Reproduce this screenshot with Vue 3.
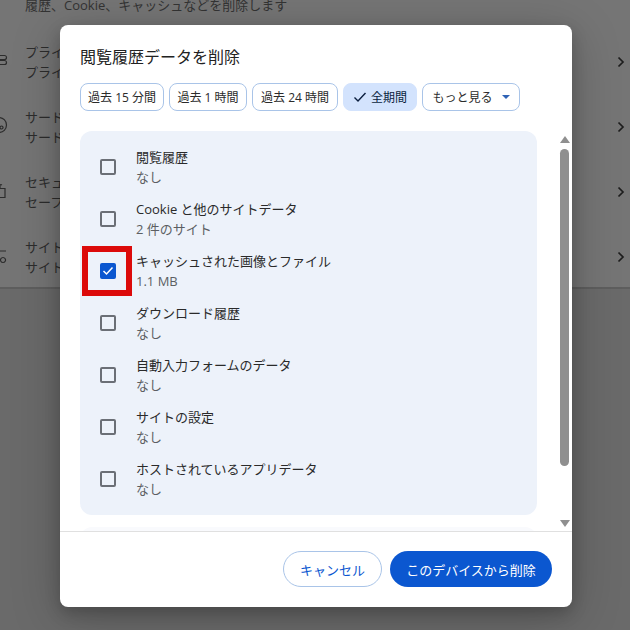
<script setup>
const ranges = ['過去 15 分間', '過去 1 時間', '過去 24 時間']
const items = [
  { title: '閲覧履歴', sub: 'なし', checked: false },
  { title: 'Cookie と他のサイトデータ', sub: '2 件のサイト', checked: false },
  { title: 'キャッシュされた画像とファイル', sub: '1.1 MB', checked: true },
  { title: 'ダウンロード履歴', sub: 'なし', checked: false },
  { title: '自動入力フォームのデータ', sub: 'なし', checked: false },
  { title: 'サイトの設定', sub: 'なし', checked: false },
  { title: 'ホストされているアプリデータ', sub: 'なし', checked: false }
]
const bgRows = [
  { t: 'プライバシー', s: 'プライバシー', icon: 'M0 5.500h4.500a1.500 1.500 0 0 1 0 4H0M0 10.500h4.500a1.500 1.500 0 0 1 0 4H0' },
  { t: 'サードパーティ', s: 'サードパーティ', icon: 'M-1 2.500a7.500 7.500 0 1 1 0 15M1.500 11a1.500 1.500 0 1 0 .01 0' },
  { t: 'セキュリティ', s: 'セーフ ブラウジング', icon: 'M0 8.500h5v9H0M0 8V5a2 2 0 0 1 2 0' },
  { t: 'サイトの設定', s: 'サイトの設定', icon: 'M0 6h6M3 12.500a2.500 2.500 0 1 0 .01 0' }
]
</script>

<template>
  <div class="page">
    <div class="bg">
      <div class="bg-top">履歴、Cookie、キャッシュなどを削除します</div>
      <div v-for="r in bgRows" :key="r.t" class="bg-row">
        <svg class="bg-icon" width="10" height="24" viewBox="0 0 10 24"><path :d="r.icon" fill="none" stroke="#2c2c2c" stroke-width="1.200"/></svg>
        <div class="bg-text">
          <div>{{ r.t }}</div>
          <div>{{ r.s }}</div>
        </div>
        <svg class="bg-chev" width="10" height="12" viewBox="0 0 10 12"><path d="M2.500 1.500 7 6l-4.500 4.500" fill="none" stroke="#1d1d1d" stroke-width="1.700"/></svg>
      </div>
    </div>

    <div class="dialog">
      <h2 class="title">閲覧履歴データを削除</h2>
      <div class="chips">
        <button v-for="r in ranges" :key="r" class="chip">{{ r }}</button>
        <button class="chip chip-on">
          <svg width="14" height="12" viewBox="0 0 14 12"><path d="M1.500 6.500 5 10l7.500-8" fill="none" stroke="#0b1f3f" stroke-width="1.400"/></svg>
          全期間
        </button>
        <button class="chip chip-more">
          もっと見る
          <svg width="8" height="4" viewBox="0 0 8 4"><path d="M0 0h8L4 4z" fill="#2f62b5"/></svg>
        </button>
      </div>

      <div class="scroller">
        <div class="scroll-content">
          <div class="card">
            <div v-for="it in items" :key="it.title" class="item">
              <span class="box-wrap" :class="{ marked: it.checked }">
                <span class="box" :class="{ on: it.checked }">
                  <svg v-if="it.checked" width="12" height="10" viewBox="0 0 12 10"><path d="M1.500 5 4.500 8l6-6.500" fill="none" stroke="#fff" stroke-width="1.500"/></svg>
                </span>
              </span>
              <div class="item-text">
                <div class="item-title">{{ it.title }}</div>
                <div class="item-sub">{{ it.sub }}</div>
              </div>
            </div>
          </div>
          <div class="card-next"></div>
        </div>
        <div class="scrollbar">
          <span class="arrow up"></span>
          <span class="thumb"></span>
          <span class="arrow down"></span>
        </div>
      </div>

      <div class="footer">
        <button class="btn btn-cancel">キャンセル</button>
        <button class="btn btn-primary">このデバイスから削除</button>
      </div>
    </div>
  </div>
</template>

<style>
html, body { margin: 0; background: #626262; }
</style>

<style scoped>
.page {
  position: relative;
  width: 630px;
  height: 630px;
  overflow: hidden;
  background: #6a6a6a;
  font-family: "Open Sans", "Noto Sans CJK JP", sans-serif;
  color: #1f1f1f;
}
.bg {
  height: 289px;
  background: #757575;
  border-bottom: 2px solid #5e5e5e;
  box-sizing: border-box;
  color: #2c2c2c;
  font-size: 13px;
  line-height: 20px;
}
.bg-top { padding-left: 25px; height: 30px; line-height: 10px; color: #333; }
.bg-row {
  display: flex;
  align-items: center;
  height: 65px;
  padding-left: 25px;
  position: relative;
}
.bg-text { line-height: 20px; margin-top: -2px; }
.bg-icon { position: absolute; left: 0; top: 20px; }
.bg-chev { position: absolute; left: 616px; top: 26px; }
.dialog {
  position: absolute;
  left: 60px;
  top: 25px;
  width: 512px;
  height: 582px;
  background: #fff;
  border-radius: 8px;
  box-shadow: 0 10px 50px rgba(0, 0, 0, 0.22), 0 6px 16px rgba(0, 0, 0, 0.2);
  display: flex;
  flex-direction: column;
  overflow: hidden;
}
.title {
  margin: 0;
  padding: 22px 20px 0;
  font-size: 16px;
  line-height: 20px;
  font-weight: 400;
  height: 36px;
  color: #222;
}
.chips {
  display: flex;
  gap: 5px;
  padding: 0 20px;
}
.chip {
  height: 28px;
  box-sizing: border-box;
  padding: 0;
  border: 1px solid #a9c4e8;
  border-radius: 8px;
  background: #fff;
  font: inherit;
  font-size: 12px;
  color: #2b2b2b;
  display: inline-flex;
  align-items: center;
  justify-content: center;
  white-space: nowrap;
  flex: none;
}
.chip:nth-child(1) { width: 84px; }
.chip:nth-child(2) { width: 78px; }
.chip:nth-child(3) { width: 86px; }
.chip-on {
  width: 74px;
  background: #d3e3fd;
  border-color: #d3e3fd;
  color: #0b1f3f;
  gap: 4px;
}
.chip-more { width: 98px; gap: 9px; }
.scroller {
  flex: 1;
  display: flex;
  min-height: 0;
  margin-top: 20px;
}
.scroll-content { flex: 1; padding-left: 20px; overflow: hidden; }
.card {
  width: 457px;
  height: 384px;
  background: #edf2fa;
  border-radius: 12px;
  padding-top: 10px;
  box-sizing: border-box;
}
.card-next {
  width: 457px;
  height: 30px;
  margin-top: 12px;
  background: #f9fafd;
  border-radius: 12px;
}
.item {
  display: flex;
  align-items: center;
  height: 52px;
}
.box-wrap {
  width: 56px;
  flex: none;
  display: flex;
  position: relative;
  height: 52px;
  align-items: center;
}
.box {
  margin-left: 20px;
  width: 16px;
  height: 16px;
  box-sizing: border-box;
  border: 2px solid #6b6f76;
  border-radius: 2px;
  display: flex;
  align-items: center;
  justify-content: center;
}
.box.on { background: #0b57d0; border-color: #0b57d0; }
.marked::after {
  content: '';
  position: absolute;
  left: 2px;
  top: 1px;
  width: 50px;
  height: 50px;
  box-sizing: border-box;
  border: 6px solid #dc0a0a;
}
.item-text { line-height: 20px; margin-top: -1px; }
.item-title { font-size: 13px; color: #2a2a2a; }
.item-sub { font-size: 13px; color: #5c5f63; }
.scrollbar {
  width: 15px;
  flex: none;
  display: flex;
  flex-direction: column;
  align-items: center;
}
.arrow { width: 0; height: 0; border-left: 5px solid transparent; border-right: 5px solid transparent; flex: none; }
.arrow.up { border-bottom: 7px solid #8f8f8f; margin-top: 5px; }
.arrow.down { border-top: 7px solid #8f8f8f; margin-bottom: 4px; }
.thumb { width: 9px; background: #8f8f8f; border-radius: 5px; flex: 1; margin: 6px 0 54px; }
.footer {
  height: 76px;
  flex: none;
  border-top: 1px solid #e0e0e0;
  display: flex;
  justify-content: flex-end;
  align-items: flex-start;
  gap: 8px;
  padding: 19px 20px 0;
  box-sizing: border-box;
}
.btn {
  height: 36px;
  border-radius: 18px;
  font: inherit;
  font-size: 13px;
  box-sizing: border-box;
}
.btn-cancel { width: 99px; background: #fff; border: 1px solid #a9c4e8; color: #0b57d0; }
.btn-primary { width: 162px; background: #0b57d0; border: 0; color: #fff; }
</style>
